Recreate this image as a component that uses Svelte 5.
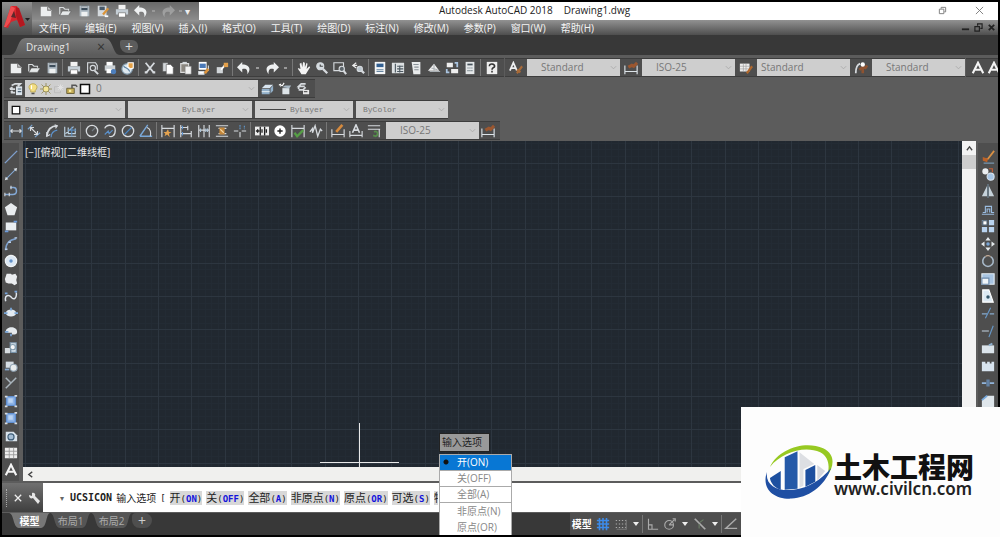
<script lang="ts">
	type Tool = { icon: string; label: string };

	// 16x16 glyphs. The default is a light outline, filled parts set their own colours.
	const icons: Record<string, string> = {
		new: '<path d="M2 3h8l4 4v7H2z" fill="#eceeef" stroke="none"/><path d="M10 3v4h4" stroke="#777"/>',
		open: '<path d="M2 12V4h4l2 2h4v2" stroke="#d8dcde"/><path d="M2 13l3-5h10l-3 5z" fill="#e6e9ea" stroke="#555" stroke-width=".6"/>',
		save: '<path d="M3 2h11v12H3z" fill="#aeb9c2" stroke="none"/><path d="M5 2h7v5H5z" fill="#3d4d5b" stroke="none"/><path d="M5 9h7v5H5z" fill="#eef0f1" stroke="none"/><path d="M5 3.500h7" stroke="#fff"/>',
		saveas: '<path d="M2 2h10v12H2z" fill="#d5dade" stroke="none"/><path d="M4 3h6v4H4z" fill="#48596a" stroke="none"/><path d="M8 12l6-7" stroke="#db9438" stroke-width="2.600"/><path d="M10 14h4" stroke="#fff" stroke-width="2"/>',
		print: '<path d="M4 1h8v5H4z" fill="#f2f2f2" stroke="none"/><path d="M1 6h14v6H1z" fill="#c5ced5" stroke="none"/><path d="M4 10h8v5H4z" fill="#fff" stroke="#666" stroke-width=".7"/>',
		preview: '<path d="M3 14V2h9l2 3v5"/><circle cx="9" cy="8" r="3"/><path d="M11 11l4 4" stroke-width="2.200"/>',
		publish: '<path d="M4 1h7v5H4z" fill="#fff" stroke="none"/><path d="M2 5h12v6H2z" fill="#c9cfd3" stroke="none"/><path d="M4 9h6v5H4z" fill="#fff" stroke="none"/><circle cx="12" cy="12" r="3" fill="#4d7fbd" stroke="none"/>',
		globe: '<circle cx="7" cy="9" r="6" fill="#dde8ef" stroke="#849cae"/><path d="M3 6c3 3 5 1 7 6" stroke="#5c82a3"/><path d="M8 2h6v6l-3 1-3-2z" fill="#e5a146" stroke="#fff"/>',
		cut: '<path d="M3 2l9 11M13 2L4 13" stroke-width="2"/><path d="M2 13h3M11 13h3" stroke-width="2.500"/>',
		copy: '<path d="M2 2h6v10H2z" fill="#d4d8db" stroke="#555" stroke-width=".6"/><path d="M6 4h5l3 3v8H6z" fill="#fff" stroke="#555" stroke-width=".7"/>',
		paste: '<path d="M2 3h9v10H2z" fill="#8b8780" stroke="#ddd"/><path d="M7 6h7v9H7z" fill="#f2f2f2" stroke="#777" stroke-width=".6"/><path d="M4 2h5" stroke-width="2"/>',
		match: '<path d="M2 1h9v9H2z" fill="#fff" stroke="none"/><path d="M3 3h7v5H3z" fill="#4a79b8" stroke="none"/><path d="M2 12h6v3H2zM13 5v6" fill="#fff"/><path d="M9 14l4-5" stroke="#dd933b" stroke-width="3"/>',
		block: '<path d="M2 7h7v7H2z" fill="#d1d5d8" stroke="none"/><path d="M7 10l4-5" stroke="#fff" stroke-width="2"/><path d="M10 2h5v5h-5z" fill="#e3a04b" stroke="none"/>',
		undo: '<path d="M6 1L0 7l6 6V9c5-1 6 1 6 6 5-7 1-11-6-11z" fill="#eef0f1" stroke="none"/>',
		redo: '<path d="M10 1l6 6-6 6V9c-5-1-6 1-6 6C-1 8 3 4 10 4z" fill="#eef0f1" stroke="none"/>',
		pan: '<path d="M5 15C3 11 1 10 1 8l3 1-1-6 2-1 1 5 1-6 2 1v5l2-5 1 1-1 6 3-3 1 1-5 8z" fill="#f3f3f3" stroke="none"/>',
		zoom: '<circle cx="6" cy="6" r="4" fill="#d5dce1"/><path d="M6 4v2h3" stroke="#444"/><path d="M9 9l5 5" stroke-width="2.500"/>',
		zoomwin: '<path d="M1 2h11v9H1z"/><circle cx="10" cy="9" r="3" fill="#5c656b"/><path d="M12 11l3 4" stroke-width="2.400"/>',
		zoomprev: '<path d="M6 2L2 5l4 3M2 5h5" stroke="#eee"/><circle cx="10" cy="9" r="3" fill="#bcc8d0"/><path d="M12 11l3 3" stroke-width="2.500"/>',
		props: '<path d="M2 1h12v14H2z" fill="#f2f4f5" stroke="none"/><path d="M4 3h8v4H4z" fill="#315f91" stroke="none"/><path d="M4 10h8M4 12h8" stroke="#6684a0"/>',
		design: '<path d="M1 2h14v12H1z" fill="#dce0e2" stroke="none"/><path d="M5 3v10M7 6h7M7 9h7M7 12h7M10 5v8" stroke="#4d5962"/>',
		palette: '<path d="M3 1h10v14H5z" fill="#e8eaeb" stroke="none"/><path d="M5 4h6M6 7h5M6 10h5" stroke="#8a9299"/>',
		sheet: '<path d="M1 11l7-8 6 8z" fill="#f0f0f0" stroke="none"/><path d="M3 12h12M8 4v7M5 8l7 2" stroke="#aab0b4"/>',
		markup: '<path d="M2 2h7v5H2zM7 9h8v5H7z" fill="#eee" stroke="none"/><path d="M11 2h3v5M2 9v4h3" stroke="#a9c3df" stroke-width="2"/>',
		calc: '<path d="M3 1h10v14H3z" fill="#e4e7e8" stroke="none"/><path d="M5 4h6" stroke="#46525b" stroke-width="2"/><path d="M5 8h6M5 11h6" stroke="#77838b" stroke-dasharray="1.500 .7"/>',
		help: '<path d="M2 1h12v14H2z" fill="#eee" stroke="none"/><path d="M5 6c0-4 6-3 6 0 0 2-3 1-3 4M8 11v2" stroke="#333" stroke-width="1.800"/>',
		textstyle: '<path d="M1 11L5 2l4 9M3 8h4" stroke="#eef0f2" stroke-width="2"/><path d="M9 14l6-8M9 10l4 3" stroke="#a86a38" stroke-width="2.400"/>',
		dimstyle: '<path d="M1 5v10M15 5v10M1 12h14" stroke="#dce3e8"/><path d="M5 7l4-2 2 1 4-4" stroke="#9b5730" stroke-width="3.600"/>',
		tablestyle: '<path d="M1 3h11v9H1z" fill="#eee" stroke="none"/><path d="M1 6h11M1 9h11M5 3v9M8 3v9" stroke="#999" stroke-width=".7"/><path d="M9 14l6-8" stroke="#b0682d" stroke-width="2.500"/>',
		leaderstyle: '<path d="M2 14C2 7 4 4 7 3" stroke-width="2"/><path d="M6 10l4-3 3 1 2-3M10 8v6" stroke="#8f5331" stroke-width="3"/><circle cx="10" cy="4" r="2.500" fill="#fff" stroke="none"/>',
		text: '<path d="M2 14L8 2l6 12M5 10h6" stroke="#f4f4f4" stroke-width="2.400"/>',
		layers: '<path d="M3 4l4-2h6l-3 3M1 8l3-2M2 12l2-2M1 8h6M2 12h5" stroke-width="2"/><path d="M8 5h7v10H8z" fill="#dce5ec" stroke="none"/><path d="M10 8h4M10 11h4" stroke="#4c6273"/>',
		bulb: '<path d="M5 10C0 5 4 1 8 1s8 4 3 9v2H5z" fill="#f4df83" stroke="#bcaa5a"/><path d="M6 13h4v2H6z" fill="#555" stroke="none"/><path d="M6 3v5" stroke="#fff"/>',
		sun: '<path d="M8 0v16M0 8h16M2 2l12 12M14 2L2 14" stroke="#8c8146" stroke-width="1"/><circle cx="8" cy="8" r="4" fill="#f4e697" stroke="#9c925d"/>',
		frozen: '<path d="M2 5h8v8H2z" stroke="#bcbcbc"/><path d="M10 2v8M6 6h8M7 3l6 6M13 3L7 9" stroke="#e1e1e1"/>',
		lock: '<path d="M1 7h10v7H1z" fill="#c5ad57" stroke="#6d653e"/><path d="M8 7V3h5l2 2" stroke="#555" stroke-width="2"/><path d="M4 9h3v3H4z" fill="#f6eca5" stroke="none"/>',
		swatch: '<path d="M2 2h12v12H2z" fill="#fff" stroke="#111" stroke-width="2"/>',
		layerset: '<path d="M2 7l4-4h9l-4 4z" fill="#d8e4ef" stroke="none"/><path d="M2 8h9v6H2zM12 7l3-3v6l-3 3z" fill="#91afc9" stroke="none"/><path d="M2 11h9" stroke="#dce8ef"/>',
		layerprev: '<path d="M1 3l4 1 2-3M3 2v3" stroke="#fff"/><path d="M5 7h8v7H5z" fill="#dde4e8" stroke="none"/><path d="M5 6l3-2h7l-2 3z" fill="#aab9c5" stroke="none"/>',
		layerstate: '<path d="M11 2H6L3 5h7M3 9h5l3-3M3 6v2" stroke-width="2"/><path d="M8 9h7v5H8z" fill="#e7e7e7" stroke="none"/><path d="M9 11h4" stroke="#555"/>',
		dimlin: '<path d="M1 1v14M15 1v14" stroke="#6f9fd0"/><path d="M2 8h12M4 6L2 8l2 2M12 6l2 2-2 2"/>',
		dimalign: '<path d="M1 6l5-5M9 15l6-5" stroke="#7ca6d2"/><path d="M4 4l8 8M4 8V4h4M8 12h4V8"/>',
		dimarc: '<path d="M2 14C3 5 7 2 14 2" stroke-width="2"/><path d="M7 15c0-4 2-7 7-8" stroke="#5c91cb"/><path d="M2 9v5l4-2M11 1l3 1-2 3"/>',
		dimord: '<path d="M2 3v11h13M6 4v7h8V5M3 11l9-8" stroke="#bfd4e4"/><path d="M6 7h9M10 3v11" stroke="#598bbd"/>',
		radius: '<circle cx="8" cy="8" r="6.500" stroke-width="1.500"/><path d="M8 8l4-4" stroke="#747d84"/>',
		jog: '<path d="M2 5c2-5 12-5 12 2s-4 8-7 7" stroke-width="1.500"/><path d="M2 12l4-4 1 3 4-4" stroke="#5b90ca"/>',
		diameter: '<circle cx="8" cy="8" r="6.500" stroke-width="1.500"/><path d="M4 12l8-8" stroke="#4a87c6"/>',
		angle: '<path d="M1 14L10 1M1 14h14" stroke="#7aa8d8" stroke-width="1.600"/><path d="M9 4c4 1 5 6 4 10"/>',
		quick: '<path d="M1 1v14M15 1v14M1 5h14"/><path d="M8 6l1 3h3l-3 2 1 4-3-3-3 2 1-3-2-2h3z" fill="#e6a44f" stroke="none"/>',
		baseline: '<path d="M2 1v14M10 2v5M14 8v7M2 4h8M2 11h12"/><path d="M4 2v4M4 9v4" stroke="#5d91cb"/>',
		cont: '<path d="M2 1v14M8 1v14M14 1v14M2 7h12"/><path d="M4 5v4M10 5v4M12 5v4" stroke="#aac2d5"/>',
		space: '<path d="M1 2h14M1 14h14M4 5h9M4 11h9"/><path d="M5 4h6v8H5z" fill="#c38639" stroke="none"/><path d="M6 6l4 4" stroke="#f4d7a3"/>',
		break: '<path d="M1 8h5M10 8h5M8 9v6"/><path d="M8 1v5M13 2v4" stroke="#5f95c9" stroke-dasharray="2 1"/>',
		tolerance: '<path d="M0 3h16v10H0z" fill="#ececec" stroke="none"/><path d="M6 3v10M11 3v10M1 8h4M3 6v4M8 6v4M13 6v4" stroke="#222" stroke-width="1.500"/>',
		center: '<circle cx="8" cy="8" r="6.500" fill="#fff" stroke="none"/><path d="M8 5v6M5 8h6" stroke="#222" stroke-width="1.600"/>',
		inspect: '<path d="M1 1v14M15 1v14M1 5h14"/><path d="M4 10l3 4 7-7" stroke="#569e46" stroke-width="2.600"/>',
		jogline: '<path d="M1 9l3-4v5l3-8 3 12 3-8 2 2" stroke-width="1.500"/>',
		edit: '<path d="M1 6v9M15 6v9M1 12h14"/><path d="M6 9l7-8" stroke="#d58a3e" stroke-width="3"/>',
		textedit: '<path d="M4 10L8 1l4 9M6 7h4" stroke-width="1.800"/><path d="M1 8v7M15 8v7M1 13h14"/>',
		update: '<path d="M1 2h14M1 6h14M14 6v9"/><path d="M8 9c4-2 6 3 2 5l-3-1" stroke="#568c4b" stroke-width="2"/>',
		line: '<path d="M1 15L15 1" stroke="#7fa0cd" stroke-width="1.600"/>',
		xline: '<path d="M3 13L13 3" stroke="#83a8d2"/><path d="M1 15l4-1-3-3zM15 1l-4 1 3 3z" fill="#dce3e8" stroke="none"/>',
		pline: '<path d="M1 12h9c6 0 5-8 1-8H7" stroke="#83a8d5" stroke-width="1.700"/><path d="M1 10v4M6 10v4M8 2v4"/>',
		polygon: '<path d="M8 1l7 5-3 9H4L1 6z" fill="#e9ecee" stroke="none"/>',
		rect: '<path d="M2 4h12v9H2z" fill="#e9edf0" stroke="none"/><path d="M1 14h4M11 3h4" stroke="#6d9cdc" stroke-width="2"/>',
		arc: '<path d="M2 15C2 7 6 3 14 2" stroke="#7da0cc" stroke-width="1.700"/><path d="M1 14h3M12 1h3M5 6h3" stroke="#bad0ea" stroke-width="1.600"/>',
		circle: '<circle cx="8" cy="8" r="6.500" fill="#dce8f4" stroke="#f2f4f5"/><circle cx="8" cy="8" r="2" fill="#6492c9" stroke="none"/>',
		cloud: '<path d="M3 2h5l1 1 4-1 2 3-1 4 1 4-3 2-3-2H5l-3-1-1-4 1-3z" fill="#ebedef" stroke="none"/>',
		spline: '<path d="M2 14C0 6 6 7 8 9c3 4 7 2 6-5" stroke="#dfe5ec" stroke-width="1.700"/><path d="M1 5h3M12 3h3" stroke="#78a5dc" stroke-width="2"/>',
		ellipse: '<ellipse cx="8" cy="8" rx="6" ry="4" fill="#e2eaf1" stroke="none"/><path d="M0 8h4M12 8h4M8 2v3" stroke="#78a6d7" stroke-width="2"/>',
		ellarc: '<path d="M2 9c0-7 13-7 13 0 0 3-3 3-6 3v-2H3z" fill="#e5eaee" stroke="none"/><path d="M1 9h4M8 11v3" stroke="#79a4d5" stroke-width="2"/>',
		insert: '<path d="M1 8h6v6H1z" fill="#d7dce0" stroke="none"/><path d="M7 2h7v11H8z" fill="#dae5ed" stroke="#7893aa"/><circle cx="10" cy="7" r="3" fill="#f6f7f8" stroke="#829cae"/>',
		make: '<path d="M2 3h9v7H2z" fill="#d5dde4" stroke="none"/><circle cx="11" cy="10" r="4" fill="#e8ecee" stroke="#92a5b5"/><path d="M1 12h5" stroke="#87aad0" stroke-width="2"/>',
		point: '<path d="M2 2l6 6 6-6M8 8l-6 6" stroke="#a9b4bc" stroke-width="1.700"/>',
		hatch: '<path d="M3 3h10v10H3z" fill="#8fb4e6" stroke="#5f8ed0" stroke-width="1.600"/><path d="M5 5h5v5H5z" fill="#bcd4f2" stroke="none"/><path d="M1 3h3M1 14h3M12 14h3M12 2h3" stroke-width="2"/>',
		region: '<path d="M2 3h9l4 4v7H2z" fill="#d9e3eb" stroke="none"/><circle cx="8" cy="9" r="3.500" fill="#a5bdd3" stroke="#3e5d77"/>',
		table: '<path d="M1 2h14v12H1z" fill="#eee" stroke="none"/><path d="M1 6h14M1 10h14M6 2v12M11 2v12" stroke="#999" stroke-width="1"/>',
		erase: '<path d="M3 12l5-2 7-9" stroke="#d99145" stroke-width="2"/><path d="M2 8l6 2-1 4-5-2z" fill="#bc6228" stroke="none"/><path d="M3 15h12" stroke="#7c9db7"/>',
		duplicate: '<circle cx="5" cy="5" r="3.500" fill="#eceff1" stroke="none"/><circle cx="11" cy="11" r="4" fill="#a7c5e5" stroke="#d5e2ee"/><path d="M9 2h4v4" stroke="#c25d36"/>',
		mirror: '<path d="M7 2v12H1zM9 2v12h6z" fill="#c6d2da" stroke="none"/><path d="M8 0v16" stroke="#718899"/>',
		offset: '<path d="M1 14h14M2 12h3V5h7v7h3M7 12V8h3v4" stroke="#9abce0"/>',
		array: '<path d="M1 1h6v6H1zM9 1h6v6H9zM1 9h6v6H1zM9 9h6v6H9z" fill="#b9d3ef" stroke="none"/><path d="M2 2h5v5H2z" fill="#fff" stroke="#456"/>',
		move: '<path d="M8 0l3 4H5zM8 16l3-4H5zM0 8l4-3v6zM16 8l-4-3v6z" fill="#e4e9ec" stroke="none"/><circle cx="8" cy="8" r="2" fill="#78a4d4" stroke="none"/>',
		rotate: '<path d="M11 3A6 6 0 1 1 5 3" stroke="#a8b9c9" stroke-width="1.800"/><path d="M5 3c2-2 5-1 6 0" stroke="#c2ab98"/>',
		scale: '<path d="M1 2h14v12H1z" fill="#a8c4e2" stroke="#e4edf4"/><path d="M1 7h8v7H1z" fill="#f1f5f8" stroke="#6d8aaa"/>',
		stretch: '<path d="M2 1h7l5 14H2z" fill="#dce9f3" stroke="#fff"/><circle cx="8" cy="9" r="2" fill="#34576a" stroke="none"/>',
		trim: '<path d="M1 9h6M10 9h5" stroke="#86aacd"/><path d="M5 14l6-12" stroke="#6798c9"/>',
		extend: '<path d="M1 8h8" stroke="#b5c4d0"/><path d="M9 15l5-13" stroke="#6798c9"/>',
		break1: '<path d="M1 5h14v9H1z" fill="#dbe4eb" stroke="none"/><path d="M9 5l4-2" stroke="#8fb0cf" stroke-width="2"/>',
		break2: '<path d="M1 3h4v2h2V3h3v2h2V3h3v11H1z" fill="#d8e4ef" stroke="none"/>',
		join: '<path d="M1 8h5M10 8h5" stroke="#91b4da" stroke-width="2"/><path d="M7 4v8M9 4v8" stroke="#6d98ca"/>',
		chamfer: '<path d="M1 15V7l6-5h8v13z" fill="#dfe6eb" stroke="none"/><path d="M1 7l6-5" stroke="#76a7db" stroke-width="2"/>',
		grid: '<path d="M1 4h14M1 8h14M1 12h14M4 1v14M8 1v14M12 1v14" stroke="#3d8bea" stroke-width="1.800"/>',
		snap: '<path d="M2 4h12M2 8h12M2 12h12" stroke="#aaa" stroke-dasharray="1.500 2"/><path d="M14 3v11H3" stroke="#777"/>',
		ortho: '<path d="M4 2v12h11M4 9h4v5" stroke="#aaa"/>',
		polar: '<circle cx="7" cy="9" r="5" stroke="#aaa"/><path d="M7 9h5M7 9l6-6M11 2h3v3" stroke="#aaa"/>',
		iso: '<path d="M2 2l12 12" stroke="#aaa" stroke-width="2"/><path d="M7 13V8M8 6l4-3" stroke="#697b65"/>',
		osnap: '<path d="M14 2L2 13h13" stroke="#aaa" stroke-width="1.600"/>'
	};

	const tools = (names: string): Tool[] => names.split(' ').map((n) => ({ icon: n, label: n }));

	const quickTools = tools('new open save saveas print');
	const menus = [
		'文件(F)', '编辑(E)', '视图(V)', '插入(I)', '格式(O)', '工具(T)',
		'绘图(D)', '标注(N)', '修改(M)', '参数(P)', '窗口(W)', '帮助(H)'
	];
	const fileGroups = ['new open save', 'print preview publish globe', 'cut copy paste match block'].map(tools);
	const viewGroups = ['pan zoom zoomwin zoomprev', 'props design palette sheet markup calc', 'help'].map(tools);
	const dimGroups = [
		'dimlin dimalign dimarc dimord',
		'radius jog diameter angle',
		'quick baseline cont space break',
		'tolerance center inspect jogline',
		'edit textedit update'
	].map(tools);
	const drawTools = tools(
		'line xline pline polygon rect arc circle cloud spline ellipse ellarc insert make point hatch hatch region table text'
	);
	const modifyTools = tools(
		'erase duplicate mirror offset array move rotate scale stretch trim extend break1 break2 join chamfer arc spline cut block'
	);
	const styles = [
		{ icon: 'textstyle', value: 'Standard', near: false },
		{ icon: 'dimstyle', value: 'ISO-25', near: false },
		{ icon: 'tablestyle', value: 'Standard', near: true },
		{ icon: 'leaderstyle', value: 'Standard', near: false }
	];
	const layerFlags = ['bulb', 'sun', 'frozen', 'lock', 'swatch'];

	const prompts = [
		['开', 'ON'],
		['关', 'OFF'],
		['全部', 'A'],
		['非原点', 'N'],
		['原点', 'OR'],
		['可选', 'S']
	];
	const choices = ['开(ON)', '关(OFF)', '全部(A)', '非原点(N)', '原点(OR)'];
	let chosen = $state(0);

	const sheets = ['模型', '布局1', '布局2'];
	let sheet = $state(0);
</script>

{#snippet glyph(name: string)}
	<svg class="glyph" viewBox="0 0 16 16" fill="none" stroke="#d6dade" stroke-width="1.3" aria-hidden="true">
		{@html icons[name]}
	</svg>
{/snippet}

{#snippet tool(t: Tool)}
	<button class="tool" aria-label={t.label}>{@render glyph(t.icon)}</button>
{/snippet}

{#snippet groups(list: Tool[][])}
	{#each list as group}
		<div class="group">
			{#each group as t}{@render tool(t)}{/each}
		</div>
	{/each}
{/snippet}

{#snippet combo(label: string, value: string, kind: string)}
	<span class="combo {kind}">
		<select aria-label={label}><option>{value}</option></select>
		<svg class="chevron" viewBox="0 0 8 8" fill="none" stroke="#aaa"><path d="M1 2.500l3 3 3-3" /></svg>
	</span>
{/snippet}

<div class="app">
	<header class="top">
		<button class="logo" aria-label="Application menu">
			<svg viewBox="0 0 30 30">
				<path d="M2 23L9 2h6l8 19-5 2-3-7-6 2-3 6z" fill="#d7262d" />
				<path d="M2 23L9 2l4 2-5 14-4 5z" fill="#ef4d50" />
				<path d="M9 13l3-6 2 7z" fill="#5c292b" />
				<path d="M14 3l3 1 6 17-5 2-4-11z" fill="#b4171f" />
				<path d="M23 14h5l-2.500 3z" fill="#202020" />
			</svg>
		</button>
		<div class="bars">
			<div class="titlebar">
				<div class="quick">
					{#each quickTools as t}{@render tool(t)}{/each}
					{@render tool({ icon: 'undo', label: 'undo' })}
					<i class="dot"></i>
					<span class="faded">{@render tool({ icon: 'redo', label: 'redo' })}</span>
					<i class="dot"></i>
					<span class="more">▾</span>
				</div>
				<h1>Autodesk AutoCAD 2018<span>Drawing1.dwg</span></h1>
				<div class="winbuttons">
					<button aria-label="Restore">
						<svg viewBox="0 0 10 10" fill="none" stroke="#777"><path d="M1.500 3.500h5v5h-5zM3.500 3V1.500h5v5H7" /></svg>
					</button>
					<button aria-label="Close">
						<svg viewBox="0 0 10 10" fill="none" stroke="#777"><path d="M1 1l8 8M9 1L1 9" /></svg>
					</button>
				</div>
			</div>
			<nav class="menubar">
				{#each menus as m}<button>{m}</button>{/each}
				<div class="docbuttons">
					<button aria-label="Minimize drawing">
						<svg viewBox="0 0 10 10" stroke="#222" stroke-width="2"><path d="M1 7h8" /></svg>
					</button>
					<button aria-label="Restore drawing">
						<svg viewBox="0 0 10 10" fill="none" stroke="#222" stroke-width="1.3"><path d="M1 4h5v5H1zM4 3V1h5v5H7" /></svg>
					</button>
					<button aria-label="Close drawing">
						<svg viewBox="0 0 10 10" stroke="#222" stroke-width="2"><path d="M2 2l6 6M8 2L2 8" /></svg>
					</button>
				</div>
			</nav>
		</div>
	</header>

	<div class="filetabs">
		<button class="filetab"><span>Drawing1</span><span class="x">×</span></button>
		<button class="addfile" aria-label="New drawing">+</button>
	</div>

	<section class="toolbars">
		<div class="row">
			<div class="bar">
				{@render groups(fileGroups)}
				<div class="group">
					{@render tool({ icon: 'undo', label: 'undo' })}<i class="dot"></i>
					{@render tool({ icon: 'redo', label: 'redo' })}<i class="dot"></i>
				</div>
				{@render groups(viewGroups)}
			</div>
			<div class="bar styles">
				{#each styles as s}
					{@render tool({ icon: s.icon, label: s.icon })}
					{@render combo(s.icon, s.value, s.near ? 'style near' : 'style')}
				{/each}
			</div>
			<div class="bar texts">
				{@render tool({ icon: 'text', label: 'text' })}
				{@render tool({ icon: 'text', label: 'single line text' })}
			</div>
		</div>

		<div class="row">
			<div class="bar">
				{@render tool({ icon: 'layers', label: 'layers' })}
				<div class="layer">
					{#each layerFlags as f}{@render glyph(f)}{/each}
					{@render combo('layer', '0', 'fill')}
				</div>
				{@render tool({ icon: 'layerset', label: 'make current' })}
				{@render tool({ icon: 'layerprev', label: 'layer previous' })}
				{@render tool({ icon: 'layerstate', label: 'layer states' })}
			</div>
		</div>

		<div class="row">
			<div class="bar bylayer">
				<div class="prop color">{@render glyph('swatch')}{@render combo('color', 'ByLayer', 'fill')}</div>
				<div class="prop linetype">{@render combo('linetype', 'ByLayer', 'fill')}</div>
				<div class="prop weight"><i class="stroke"></i>{@render combo('lineweight', 'ByLayer', 'fill')}</div>
				<div class="prop plot">{@render combo('plot style', 'ByColor', 'fill')}</div>
			</div>
		</div>

		<div class="row">
			<div class="bar">
				{@render groups(dimGroups)}
				{@render combo('dimension style', 'ISO-25', 'style')}
				{@render tool({ icon: 'dimstyle', label: 'dimension style' })}
			</div>
		</div>
	</section>

	<main class="workspace">
		<aside class="side">
			{#each drawTools as t}{@render tool(t)}{/each}
		</aside>
		<div class="drawing">
			<div class="view">
				<div class="canvas">
					<span class="viewlabel">[−][俯视][二维线框]</span>
					<i class="cross vertical"></i>
					<i class="cross horizontal"></i>
				</div>
				<div class="vscroll">
					<button aria-label="Scroll up">
						<svg viewBox="0 0 8 8" fill="none" stroke="#444" stroke-width="1.5"><path d="M1 6l3-4 3 4" /></svg>
					</button>
					<div class="thumb"></div>
				</div>
			</div>
			<div class="hscroll">
				<button aria-label="Scroll left">
					<svg viewBox="0 0 8 8" fill="none" stroke="#444" stroke-width="1.5"><path d="M6 1L2 4l4 3" /></svg>
				</button>
			</div>
		</div>
		<aside class="side right">
			{#each modifyTools as t}{@render tool(t)}{/each}
		</aside>
	</main>

	<section class="command">
		<div class="handle">
			<i class="grip"></i>
			<button aria-label="Close command line">
				<svg viewBox="0 0 10 10" stroke="#eee" stroke-width="1.6"><path d="M1 1l8 8M9 1L1 9" /></svg>
			</button>
			<button aria-label="Customize">
				<svg class="wrench" viewBox="0 0 12 12"><path d="M1 3l3 1 0-3c2-1 4 1 3 3l5 5-2 3-5-6C3 7 1 6 1 3z" fill="#e6e6e6" /></svg>
			</button>
		</div>
		<div class="prompt">
			<span class="tick">▾</span>
			<strong>UCSICON</strong>
			<span class="ask">输入选项</span>
			<span class="bracket">[</span>
			{#each prompts as [name, key]}
				<button class="chip">{name}<span>(<b>{key}</b>)</span></button>
			{/each}
			<button class="chip cut">特</button>
		</div>
	</section>

	<footer class="bottom">
		<div class="sheets">
			{#each sheets as s, i}
				<button class="sheet" class:active={sheet === i} onclick={() => (sheet = i)}>{s}</button>
			{/each}
			<button class="sheet plus" aria-label="New layout">+</button>
		</div>
		<div class="status">
			<button class="model">模型</button>
			{@render tool({ icon: 'grid', label: 'grid' })}
			{@render tool({ icon: 'snap', label: 'snap' })}
			<i class="drop"></i>
			<i class="rule"></i>
			{@render tool({ icon: 'ortho', label: 'ortho' })}
			{@render tool({ icon: 'polar', label: 'polar' })}
			<i class="drop"></i>
			{@render tool({ icon: 'iso', label: 'isometric' })}
			<i class="drop"></i>
			<i class="rule"></i>
			{@render tool({ icon: 'osnap', label: 'object snap' })}
		</div>
	</footer>

	<div class="popup">
		<div class="hint">输入选项</div>
		<div class="choices" role="listbox" aria-label="输入选项">
			{#each choices as c, i}
				<button
					role="option"
					class:lined={i < 3}
					class:chosen={chosen === i}
					aria-selected={chosen === i}
					onclick={() => (chosen = i)}>{c}</button
				>
			{/each}
		</div>
	</div>

	<div class="brand">
		<svg viewBox="0 0 70 58" aria-hidden="true">
			<path d="M5 24C14 5 41-3 59 5c13 6 11 19 4 28 3-10 2-19-7-24C40 2 17 9 5 24z" fill="#97c922" />
			<path d="M5 35l11-7v19c-6-2-10-6-11-12z" fill="#1d50a0" />
			<path d="M20 14l13-6v38l-13 1z" fill="#2459a8" />
			<path d="M35 9l15 12-11 5v17l-4 2z" fill="#dddfe3" />
			<path d="M41 27l10-5v17l-10 5z" fill="#1d4f9f" />
			<path d="M53 22l8 6-8 10z" fill="#d5d8de" />
			<path d="M2 29c-2 14 11 20 27 18 16-2 28-10 38-22-7 20-24 30-40 31C9 57-4 46 2 29z" fill="#1f4fa3" />
		</svg>
		<div class="brandtext">
			<strong>土木工程网</strong>
			<a href="#home">www.civilcn.com</a>
		</div>
	</div>
</div>

<style>
	:global(body) {
		margin: 0;
		background: #000;
	}

	.app {
		--ui: 'Open Sans', 'Noto Sans CJK SC', sans-serif;
		position: relative;
		display: flex;
		flex-direction: column;
		box-sizing: border-box;
		min-height: 100vh;
		padding: 2px;
		overflow: hidden;
		background: #000;
		font-family: var(--ui);
		font-size: 10px;
		line-height: 14px;
	}

	button,
	select {
		margin: 0;
		padding: 0;
		border: 0;
		background: none;
		color: inherit;
		font: inherit;
	}

	.tool {
		display: flex;
		flex: none;
		align-items: center;
		justify-content: center;
		width: 18px;
		height: 17px;
	}

	.glyph {
		flex: none;
		width: 14px;
		height: 14px;
	}

	/* Title and menu */
	.top {
		display: flex;
	}

	.logo {
		width: 30px;
		background: linear-gradient(#8f8f8f, #4b4b4b);
	}

	.logo svg {
		display: block;
		width: 30px;
		height: 30px;
	}

	.bars {
		flex: 1;
	}

	.titlebar {
		display: flex;
		height: 18px;
		background: #fff;
	}

	.quick {
		display: flex;
		align-items: center;
		width: 163px;
		padding-left: 4px;
		background: linear-gradient(#686868, #8c8c8c);
	}

	.quick .tool {
		width: 19px;
	}

	.faded {
		opacity: 0.3;
	}

	.dot {
		width: 3px;
		height: 2px;
		margin: 0 4px 0 3px;
		background: #999;
	}

	.quick .dot {
		margin: 0 3px 0 2px;
	}

	.more {
		color: #eee;
	}

	h1 {
		flex: 1;
		margin: 0;
		color: #222;
		font-size: 10px;
		font-weight: 400;
		line-height: 17px;
		text-align: center;
	}

	h1 span {
		margin-left: 11px;
	}

	.winbuttons {
		display: flex;
		justify-content: flex-end;
		width: 128px;
	}

	.winbuttons button {
		width: 37px;
	}

	.winbuttons svg {
		width: 9px;
		height: 9px;
	}

	.menubar {
		display: flex;
		gap: 15px;
		height: 15px;
		padding-left: 7px;
		background: linear-gradient(#929292, #4e4e4e);
		color: #f4f4f4;
	}

	.docbuttons {
		display: flex;
		gap: 4px;
		margin-left: auto;
		padding-right: 2px;
	}

	.docbuttons svg {
		display: block;
		width: 9px;
		height: 9px;
	}

	/* File tabs */
	.filetabs {
		display: flex;
		align-items: flex-end;
		height: 20px;
		background: #383838;
	}

	.filetab {
		display: flex;
		align-items: center;
		justify-content: space-between;
		width: 110px;
		height: 17px;
		margin-left: 8px;
		padding: 0 15px 0 16px;
		clip-path: path('M0 17C9 17 6 0 16 0H94C104 0 102 17 110 17Z');
		background: linear-gradient(#777, #5c5c5c);
		color: #e4e4e4;
	}

	.x {
		color: #333;
		font-size: 14px;
	}

	.addfile {
		width: 18px;
		height: 13px;
		margin-bottom: 2px;
		border-radius: 2px 6px 6px 8px;
		background: #5c5c5c;
		color: #ddd;
		font-size: 14px;
		line-height: 12px;
	}

	/* Toolbars */
	.toolbars {
		display: flex;
		flex-direction: column;
		gap: 2px;
		padding: 3px 0 1px 2px;
		background: #5c5c5c;
	}

	.row {
		display: flex;
		gap: 1px;
		height: 19px;
		overflow: hidden;
	}

	.bar {
		display: flex;
		box-sizing: border-box;
		align-items: center;
		height: 19px;
		padding: 0 3px;
		border: solid #3d3d3d;
		border-width: 1px 0;
		background: #4e4e4e;
	}

	.row:first-child .bar {
		flex: none;
	}

	.group {
		display: flex;
		align-items: center;
	}

	.group + .group {
		margin-left: 1px;
		padding-left: 2px;
		border-left: 1px solid #777;
	}

	.group + .combo {
		margin-left: 3px;
	}

	.bar.styles {
		padding: 0;
	}

	.styles .tool {
		width: 22px;
	}

	.bar.texts {
		padding: 0 0 0 4px;
	}

	.texts .tool {
		width: 16px;
	}

	.combo {
		display: grid;
		align-items: center;
		height: 17px;
		background: #cecece;
		color: #777;
	}

	.combo select {
		grid-area: 1 / 1;
		width: 100%;
		height: 17px;
		padding-left: 14px;
		appearance: none;
		line-height: 17px;
	}

	.chevron {
		grid-area: 1 / 1;
		justify-self: end;
		width: 7px;
		height: 7px;
		margin-right: 3px;
		pointer-events: none;
	}

	.combo.style {
		width: 93px;
	}

	.combo.near select {
		padding-left: 4px;
	}

	.combo.fill {
		flex: 1;
		background: none;
	}

	.layer,
	.prop {
		display: flex;
		align-items: center;
		box-sizing: border-box;
		height: 17px;
		background: #cecece;
	}

	.layer {
		width: 233px;
		padding-left: 2px;
	}

	.layer .glyph {
		width: 12px;
		height: 12px;
		margin-right: 1px;
	}

	.layer select,
	.color select,
	.weight select {
		padding-left: 4px;
	}

	.bar.bylayer {
		gap: 3px;
		padding: 0 0 0 4px;
		font-family: 'Liberation Mono', monospace;
		font-size: 8px;
	}

	.color {
		width: 117px;
		padding-left: 3px;
	}

	.color .glyph {
		width: 10px;
	}

	.linetype {
		width: 124px;
	}

	.linetype select {
		padding-left: 54px;
	}

	.weight {
		width: 98px;
		padding-left: 5px;
	}

	.stroke {
		width: 26px;
		height: 1px;
		background: #444;
	}

	.plot {
		width: 92px;
	}

	.plot select {
		padding-left: 7px;
	}

	/* Drawing area */
	.workspace {
		display: flex;
		flex: 1;
		min-height: 340px;
		background: #5c5c5c;
	}

	.side {
		display: flex;
		flex-direction: column;
		align-items: center;
		justify-content: space-between;
		width: 17px;
		margin: 2px 4px 0 0;
		padding: 5px 0 2px;
		background: #4e4e4e;
	}

	.side.right {
		width: 20px;
		margin: 2px 0 0 2px;
	}

	.drawing {
		display: flex;
		flex: 1;
		flex-direction: column;
	}

	.view {
		display: flex;
		flex: 1;
	}

	/* Major lines fall three to every 100px, minor ones three to every 20px */
	.canvas {
		position: relative;
		flex: 1;
		background-color: #212830;
		background-image:
			linear-gradient(90deg, transparent 2px, #2d3640 2px 3px, transparent 3px 35px, #2d3640 35px 36px, transparent 36px 68px, #2d3640 68px 69px, transparent 69px),
			linear-gradient(transparent 22px, #2d3640 22px 23px, transparent 23px 55px, #2d3640 55px 56px, transparent 56px 88px, #2d3640 88px 89px, transparent 89px),
			linear-gradient(90deg, transparent 2px, #232b34 2px 3px, transparent 3px 8px, #232b34 8px 9px, transparent 9px 15px, #232b34 15px 16px, transparent 16px),
			linear-gradient(transparent 2px, #232b34 2px 3px, transparent 3px 8px, #232b34 8px 9px, transparent 9px 15px, #232b34 15px 16px, transparent 16px);
		background-size:
			100px 100px,
			100px 100px,
			20px 20px,
			20px 20px;
	}

	.viewlabel {
		display: block;
		padding: 4px 2px;
		color: #e8e8e8;
	}

	.cross {
		position: absolute;
		background: #e8e8e8;
	}

	.cross.vertical {
		bottom: 0;
		left: 336px;
		width: 1px;
		height: 44px;
	}

	.cross.horizontal {
		bottom: 4px;
		left: 297px;
		width: 79px;
		height: 1px;
	}

	.vscroll {
		width: 14px;
		background: #f2f2f2;
	}

	.vscroll button,
	.hscroll button {
		display: flex;
		align-items: center;
		justify-content: center;
		width: 14px;
		height: 14px;
	}

	.vscroll svg,
	.hscroll svg {
		width: 7px;
		height: 7px;
	}

	.thumb {
		height: 14px;
		background: #cdcdcd;
	}

	.hscroll {
		height: 14px;
		background: #f0f0ee;
	}

	/* Command line */
	.command {
		display: flex;
		height: 29px;
		border: solid #5c5c5c;
		border-width: 2px 0 1px;
		background: #fff;
	}

	.handle {
		display: flex;
		align-items: center;
		justify-content: space-between;
		box-sizing: border-box;
		width: 41px;
		padding: 0 3px 0 4px;
		background: linear-gradient(#707070, #3f3f3f);
	}

	.grip {
		height: 18px;
		border-left: 1px dotted #aaa;
	}

	.handle svg {
		display: block;
		width: 8px;
		height: 8px;
	}

	.handle .wrench {
		width: 12px;
		height: 12px;
	}

	.prompt {
		display: flex;
		flex: 1;
		align-items: center;
		gap: 4px;
		padding-left: 17px;
		color: #222;
		white-space: nowrap;
	}

	.prompt strong,
	.chip span,
	.bracket {
		font-family: 'DejaVu Sans Mono', monospace;
		font-size: 9px;
	}

	.prompt strong {
		font-size: 10px;
	}

	.tick {
		width: 6px;
		color: #666;
		font-size: 8px;
	}

	.chip {
		height: 14px;
		background: #d8d8d8;
		font-size: 11px;
		line-height: 14px;
	}

	.chip b {
		color: #1414dc;
	}

	.chip.cut {
		width: 4px;
		overflow: hidden;
		text-align: left;
	}

	/* Layout tabs and status bar */
	.bottom {
		display: flex;
		justify-content: space-between;
		height: 22px;
		background: #383838;
	}

	.sheets {
		display: flex;
		padding-left: 7px;
	}

	.sheet {
		width: 41px;
		height: 15px;
		clip-path: path('M0 0H41C37 0 38 15 32 15H10C4 15 5 0 0 0Z');
		background: #555;
		color: #aaa;
	}

	.sheet.active {
		background: #777;
		color: #fff;
		font-weight: 700;
	}

	.sheet.plus {
		width: 20px;
		clip-path: none;
		border-radius: 4px 8px 8px 8px;
		background: #4e4e4e;
		color: #ccc;
		font-size: 14px;
	}

	.status {
		display: flex;
		align-items: center;
		width: 43%;
		background: #4e4e4e;
	}

	.model {
		width: 24px;
		color: #fff;
		font-weight: 700;
	}

	.drop {
		margin: 0 3px;
		border: solid transparent;
		border-width: 4px 3px 0;
		border-top-color: #eee;
	}

	.rule {
		width: 1px;
		height: 18px;
		background: #777;
	}

	/* Dynamic input */
	.popup {
		position: absolute;
		bottom: 2px;
		left: 439px;
		font-size: 10px;
	}

	.hint {
		width: 49px;
		height: 17px;
		margin-bottom: 2px;
		border: 1px solid #222;
		background: #999;
		color: #222;
		line-height: 16px;
		text-indent: 2px;
	}

	.choices {
		display: flex;
		flex-direction: column;
		width: 71px;
		border: solid #aaa;
		border-width: 1px 1px 0;
		background: #fff;
		color: #888;
	}

	.choices button {
		box-sizing: border-box;
		height: 16px;
		padding-left: 17px;
		line-height: 15px;
		text-align: left;
	}

	.choices .lined {
		border-bottom: 1px solid #aaa;
	}

	.choices .chosen {
		background: radial-gradient(circle at 6px 7px, #111 2px, transparent 3px) #0877d4;
		color: #fff;
	}

	/* Watermark */
	.brand {
		position: absolute;
		right: 0;
		bottom: 0;
		display: flex;
		align-items: center;
		box-sizing: border-box;
		width: 259px;
		height: 130px;
		padding-left: 24px;
		background: #fdfdfd;
	}

	.brand svg {
		width: 69px;
		height: 58px;
	}

	.brandtext {
		display: flex;
		flex-direction: column;
		padding-top: 6px;
		color: #111;
		white-space: nowrap;
	}

	.brandtext strong {
		font-family: 'Noto Sans CJK SC', sans-serif;
		font-size: 28px;
		font-weight: 900;
		line-height: 28px;
	}

	.brandtext a {
		color: #222;
		font-family: 'Noto Sans', sans-serif;
		font-size: 17px;
		font-weight: 600;
		line-height: 18px;
		text-decoration: none;
	}
</style>
